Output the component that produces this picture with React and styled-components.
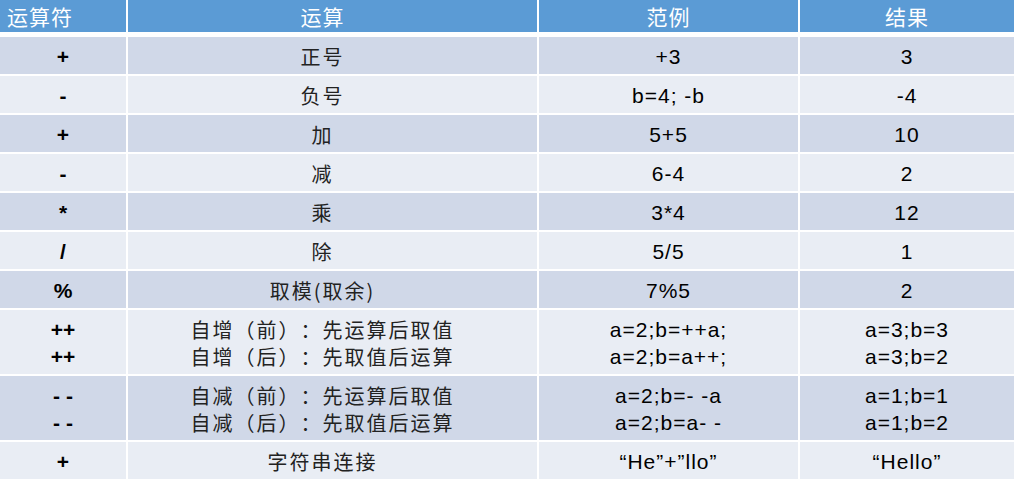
import React from 'react';
import styled, { createGlobalStyle } from 'styled-components';

const GlobalStyle = createGlobalStyle`
    html, body {
        margin: 0;
        padding: 0;
        background: #ffffff;
    }
    body {
        font-family: "Liberation Sans", "Noto Sans CJK SC", sans-serif;
    }
`;

const COLS = '126px 409px 259px 214px';

const rows = [
    { op: ['+'], name: ['正号'], example: ['+3'], result: ['3'] },
    { op: ['-'], name: ['负号'], example: ['b=4; -b'], result: ['-4'] },
    { op: ['+'], name: ['加'], example: ['5+5'], result: ['10'] },
    { op: ['-'], name: ['减'], example: ['6-4'], result: ['2'] },
    { op: ['*'], name: ['乘'], example: ['3*4'], result: ['12'] },
    { op: ['/'], name: ['除'], example: ['5/5'], result: ['1'] },
    { op: ['%'], name: ['取模(取余)'], example: ['7%5'], result: ['2'] },
    {
        op: ['++', '++'],
        name: ['自增（前）：先运算后取值', '自增（后）：先取值后运算'],
        example: ['a=2;b=++a;', 'a=2;b=a++;'],
        result: ['a=3;b=3', 'a=3;b=2'],
    },
    {
        op: ['- -', '- -'],
        name: ['自减（前）：先运算后取值', '自减（后）：先取值后运算'],
        example: ['a=2;b=- -a', 'a=2;b=a- -'],
        result: ['a=1;b=1', 'a=1;b=2'],
    },
    { op: ['+'], name: ['字符串连接'], example: ['“He”+”llo”'], result: ['“Hello”'] },
];

const Table = styled.div`
    width: 1014px;
    display: flex;
    flex-direction: column;
    gap: 2px;
`;

const HeaderRow = styled.div`
    display: grid;
    grid-template-columns: ${COLS};
    column-gap: 2px;
    height: 32px;
    margin-bottom: 3px;
`;

const HeaderCell = styled.div`
    background: #5b9bd5;
    color: #ffffff;
    font-family: "Noto Sans CJK SC", sans-serif;
    font-size: 21px;
    letter-spacing: 1px;
    display: flex;
    align-items: center;
    justify-content: ${p => (p.$left ? 'flex-start' : 'center')};
    padding-left: ${p => (p.$left ? '7px' : '0')};
    padding-right: ${p => p.$shift || 0}px;
`;

const BodyRow = styled.div`
    display: grid;
    grid-template-columns: ${COLS};
    column-gap: 2px;
    height: ${p => (p.$double ? 64 : 37)}px;
`;

const Cell = styled.div`
    background: ${p => (p.$odd ? '#d0d8e8' : '#e9edf4')};
    display: flex;
    flex-direction: column;
    align-items: center;
    justify-content: center;
    padding-right: ${p => p.$shift || 0}px;
    padding-top: 1px;
`;

const OpText = styled.div`
    font-family: "Liberation Sans", sans-serif;
    font-weight: bold;
    font-size: 21px;
    line-height: 27px;
    color: #000000;
    white-space: pre;
`;

const NameText = styled.div`
    font-family: "Noto Sans CJK SC", sans-serif;
    font-size: 20px;
    letter-spacing: 2px;
    line-height: 27px;
    color: #222222;
    white-space: pre;
    text-spacing-trim: space-all;
    font-feature-settings: "halt" 0, "chws" 0;
`;

const ValueText = styled.div`
    font-family: "Liberation Sans", sans-serif;
    font-size: 21px;
    letter-spacing: 1px;
    line-height: 27px;
    color: #000000;
    white-space: pre;
`;

const App = () => {
    return (
        <>
            <GlobalStyle />
            <Table>
                <HeaderRow>
                    <HeaderCell $left>运算符</HeaderCell>
                    <HeaderCell $shift={20}>运算</HeaderCell>
                    <HeaderCell>范例</HeaderCell>
                    <HeaderCell>结果</HeaderCell>
                </HeaderRow>
                {rows.map((row, index) => {
                    const odd = index % 2 === 0;
                    const double = row.op.length > 1;
                    return (
                        <BodyRow key={index} $double={double}>
                            <Cell $odd={odd}>
                                {row.op.map((t, i) => <OpText key={i}>{t}</OpText>)}
                            </Cell>
                            <Cell $odd={odd} $shift={20}>
                                {row.name.map((t, i) => <NameText key={i}>{t}</NameText>)}
                            </Cell>
                            <Cell $odd={odd}>
                                {row.example.map((t, i) => <ValueText key={i}>{t}</ValueText>)}
                            </Cell>
                            <Cell $odd={odd}>
                                {row.result.map((t, i) => <ValueText key={i}>{t}</ValueText>)}
                            </Cell>
                        </BodyRow>
                    );
                })}
            </Table>
        </>
    );
};

export default App;
